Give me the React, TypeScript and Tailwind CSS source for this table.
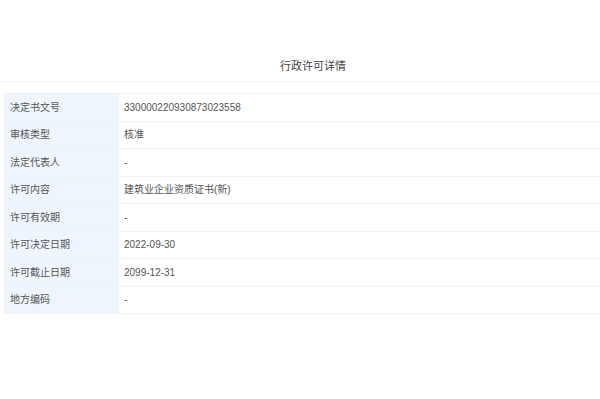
import React from "react";

const rows: [string, string][] = [
  ["决定书文号", "330000220930873023558"],
  ["审核类型", "核准"],
  ["法定代表人", "-"],
  ["许可内容", "建筑业企业资质证书(新)"],
  ["许可有效期", "-"],
  ["许可决定日期", "2022-09-30"],
  ["许可截止日期", "2099-12-31"],
  ["地方编码", "-"],
];

export default function App() {
  return (
    <div
      className="w-[600px] h-[399px] bg-white overflow-hidden"
      style={{ fontFamily: '"Liberation Sans", Arial, "Noto Sans CJK SC", sans-serif' }}
    >
      <div className="pt-[58px] pb-[7px] pl-[26px] border-b border-[#f3f5f8] text-center text-[11px] leading-[16px] text-[#444]">
        行政许可详情
      </div>
      <div className="mt-[11px] ml-[4px] border-t border-[#eef2f7]">
        {rows.map(([k, v]) => (
          <div key={k} className="flex h-[27.5px] border-b border-[#eef2f7] text-[10px] text-[#555]">
            <div className="w-[115px] bg-[#eef5fd] flex items-center pl-[6px]">{k}</div>
            <div className="flex-1 flex items-center pl-[5px]">{v}</div>
          </div>
        ))}
      </div>
    </div>
  );
}
